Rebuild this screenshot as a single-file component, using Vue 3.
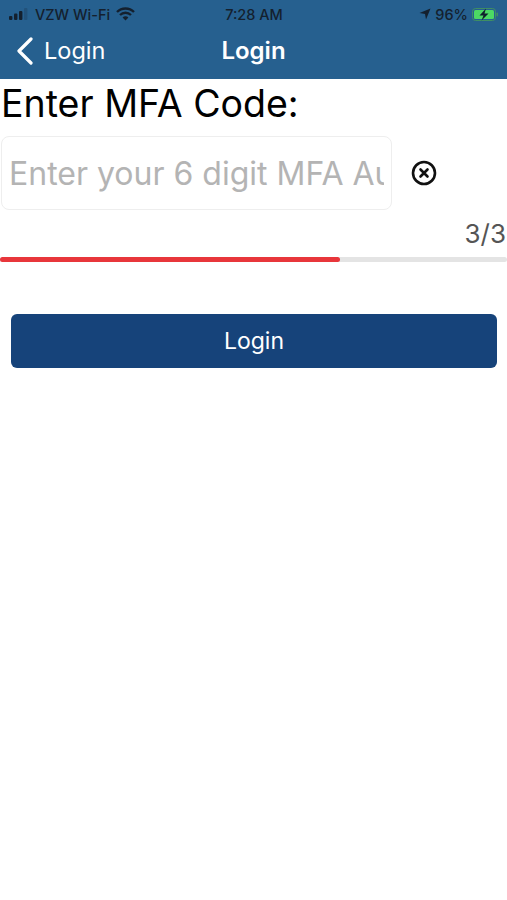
<template>
  <div class="screen">
    <header class="app-header">
      <div class="status-bar">
        <div class="status-left">
          <svg class="signal" width="20" height="12" viewBox="0 0 20 12">
            <rect x="0" y="8" width="3.4" height="4" rx="1" fill="#14202e" />
            <rect x="5" y="5.5" width="3.4" height="6.5" rx="1" fill="#14202e" />
            <rect x="10" y="3" width="3.4" height="9" rx="1" fill="#14202e" />
            <rect x="15" y="0" width="3.4" height="12" rx="1" fill="#14202e" opacity="0.2" />
          </svg>
          <span>VZW Wi-Fi</span>
          <svg class="wifi" width="19" height="14" viewBox="0 0 19 14" fill="none" stroke="#14202e" stroke-width="2.4">
            <path d="M1 5 A12 12 0 0 1 18 5" />
            <path d="M4 8 A8 8 0 0 1 15 8" />
            <path d="M9.5 13.5 L6.6 10.6 A4 4 0 0 1 12.4 10.6 Z" fill="#14202e" stroke="none" />
          </svg>
        </div>
        <div class="status-time">7:28 AM</div>
        <div class="status-right">
          <svg width="12" height="12" viewBox="0 0 12 12">
            <path d="M11.5 0.5 L0.5 5 L6 6 L7 11.5 Z" fill="#14202e" />
          </svg>
          <span>96%</span>
          <svg width="27" height="13" viewBox="0 0 27 13">
            <rect x="0.5" y="0.5" width="23" height="12" rx="3" fill="none" stroke="#3f8f63" />
            <rect x="2" y="2" width="20" height="9" rx="1.5" fill="#4cd964" />
            <rect x="24.5" y="4.5" width="1.5" height="4" rx="0.7" fill="#3f8f63" />
            <path d="M14 0.5 L7.5 7.5 H11.5 L9.5 12.5 L16.5 5.5 H12.5 Z" fill="#10202c" />
          </svg>
        </div>
      </div>
      <div class="nav-bar">
        <div class="nav-back">
          <svg width="18" height="28" viewBox="0 0 18 28" fill="none" stroke="#fff" stroke-width="3.2" stroke-linecap="round" stroke-linejoin="round">
            <path d="M15 2 L3 14 L15 26" />
          </svg>
          <span>Login</span>
        </div>
        <div class="nav-title">Login</div>
      </div>
    </header>

    <main class="content">
      <h1 class="heading">Enter MFA Code:</h1>
      <div class="input-row">
        <input class="code-input" type="text" placeholder="Enter your 6 digit MFA Authentication Code" />
        <button class="clear-btn" type="button" aria-label="Clear">
          <svg width="26" height="26" viewBox="0 0 26 26" fill="none" stroke="#111" stroke-linecap="round">
            <circle cx="13" cy="13" r="11" stroke-width="2.6" />
            <path d="M9.5 9.5 L16.5 16.5 M16.5 9.5 L9.5 16.5" stroke-width="2.6" />
          </svg>
        </button>
      </div>
      <div class="step-count">3/3</div>
      <div class="progress">
        <div class="progress-fill" :style="{ width: progress + '%' }"></div>
      </div>
      <button class="login-btn" type="button">Login</button>
    </main>
  </div>
</template>

<script setup>
const progress = 67
</script>

<style>
html,
body {
  margin: 0;
  background: #fff;
}
</style>

<style scoped>
.screen {
  width: 507px;
  height: 900px;
  overflow: hidden;
  background: #fff;
  font-family: Inter, "Liberation Sans", sans-serif;
}

.app-header {
  height: 79px;
  background: #26608f;
  box-sizing: border-box;
}

.status-bar {
  height: 28px;
  padding: 0 8px 0 9px;
  display: grid;
  grid-template-columns: 1fr auto 1fr;
  align-items: center;
  font-size: 14.5px;
  font-weight: 500;
  color: #14202e;
}

.status-left,
.status-right {
  display: flex;
  align-items: center;
  gap: 6px;
}

.status-right {
  justify-content: flex-end;
  gap: 4px;
}

.nav-bar {
  position: relative;
  height: 51px;
  display: flex;
  align-items: center;
  justify-content: center;
  color: #fff;
}

.nav-back {
  position: absolute;
  left: 16px;
  top: 8px;
  display: flex;
  align-items: center;
  gap: 10px;
  font-size: 23.5px;
}

.nav-title {
  font-size: 24px;
  font-weight: 600;
  margin-top: -7px;
}

.content {
  display: flex;
  flex-direction: column;
}

.heading {
  margin: 0 0 0 1px;
  height: 53px;
  font-size: 37.5px;
  line-height: 50px;
  font-weight: 400;
  color: #000;
}

.input-row {
  margin-top: 4px;
  display: flex;
  align-items: center;
}

.code-input {
  width: 391px;
  height: 74px;
  margin-left: 1px;
  padding: 0 7px;
  box-sizing: border-box;
  border: 1px solid #eeeeee;
  border-radius: 8px;
  outline: none;
  font-family: inherit;
  font-size: 32px;
  color: #333;
}

.code-input::placeholder {
  color: #b4b4b4;
}

.clear-btn {
  margin-left: 19px;
  padding: 0;
  border: none;
  background: none;
  display: flex;
}

.step-count {
  margin-top: 7px;
  padding-right: 1px;
  text-align: right;
  font-size: 26px;
  line-height: 34px;
  color: #555;
}

.progress {
  margin-top: 6px;
  height: 5px;
  background: #e4e4e4;
  border-radius: 3px;
}

.progress-fill {
  height: 100%;
  background: #e8363b;
  border-radius: 3px;
}

.login-btn {
  margin: 52px 10px 0 11px;
  height: 54px;
  border: none;
  border-radius: 6px;
  background: #16437a;
  color: #fff;
  font-family: inherit;
  font-size: 23px;
}
</style>
